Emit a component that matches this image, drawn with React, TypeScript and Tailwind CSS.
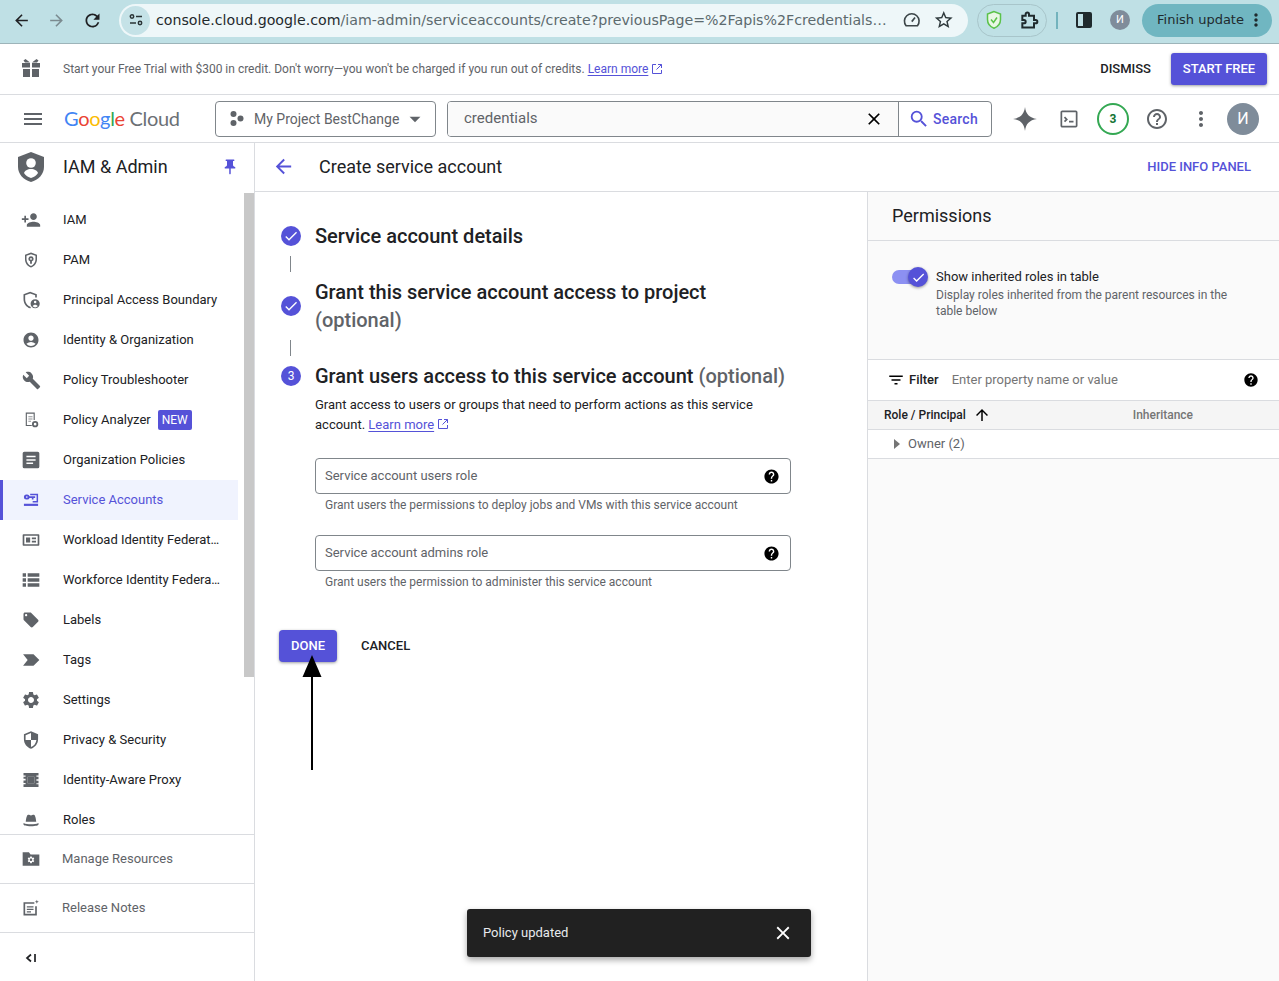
import React from "react";
import {
  MdArrowBack, MdArrowForward, MdRefresh, MdStarBorder, MdMenu, MdClose, MdSearch, MdHelpOutline, MdMoreVert, MdPushPin,
  MdPersonAdd, MdAccountCircle, MdBuild, MdLocalOffer, MdSettings, MdArrowUpward, MdHelp, MdCheck, MdFilterList, MdArrowDropDown,
} from "react-icons/md";

const P = "#5552d8";
const G = "#5f6368";

const Svg = ({ children, size = 20, className = "" }: { children: React.ReactNode; size?: number; className?: string }) => (
  <svg width={size} height={size} viewBox="0 0 24 24" fill="currentColor" className={className}>{children}</svg>
);

const icons: Record<string, React.ReactNode> = {
  iam: <MdPersonAdd size={20} />,
  pam: <Svg size={18}><path fillRule="evenodd" d="M12 2 4 5v6c0 5 3.400 9.700 8 11 4.600-1.300 8-6 8-11V5l-8-3Zm0 2.200 6 2.200V11c0 4-2.500 7.700-6 8.900-3.500-1.200-6-4.900-6-8.900V6.400l6-2.200Z" /><path fillRule="evenodd" d="M12 7a3.500 3.500 0 0 0-1.200 6.800V17h2.400v-3.200A3.500 3.500 0 0 0 12 7Zm0 2.300a1.200 1.200 0 1 1 0 2.400 1.200 1.200 0 0 1 0-2.400Z" /></Svg>,
  pab: <Svg size={20}><path fillRule="evenodd" d="M11 2 3 5v6c0 5 3.400 9.700 8 11l1-.3-1-1.900C7.500 18.700 5 15 5 11V6.400l6-2.200 6 2.200V9h2V5l-8-3Z" /><path fillRule="evenodd" d="M17 11a5.500 5.500 0 1 0 0 11 5.500 5.500 0 0 0 0-11Zm0 2a1.500 1.500 0 1 1 0 3 1.500 1.500 0 0 1 0-3Zm-3 6.500c.5-1 1.700-1.700 3-1.700s2.500.7 3 1.700a4 4 0 0 1-6 0Z" /></Svg>,
  identity: <MdAccountCircle size={18} />,
  tool: <MdBuild size={19} />,
  analyzer: <Svg size={18}><path fillRule="evenodd" d="M5 2h12v10h-1.500V3.500h-9v15H13V20H5V2Z" /><path d="M8.500 7h5.500v1.300H8.500zM8.500 10h5.500v1.300H8.500zM8.500 13h3.500v1.300H8.500z" opacity="0.7" /><circle cx="17.500" cy="17.500" r="3" fill="none" stroke="currentColor" strokeWidth="2.400" /></Svg>,
  org: <Svg size={20}><path fillRule="evenodd" d="M4 2h16a2 2 0 0 1 2 2v16a2 2 0 0 1-2 2H4a2 2 0 0 1-2-2V4a2 2 0 0 1 2-2Zm2.500 5v1.800h11V7h-11Zm0 4v1.800h11V11h-11Zm0 4v1.800h8V15h-8Z" /></Svg>,
  sa: <Svg size={20}><path fillRule="evenodd" d="M6.500 5.500h1a3 3 0 0 1 2.800 2H17v2h-2v2h-2v-2h-2.700a3 3 0 0 1-2.800 2h-1a3 3 0 0 1 0-6Zm.5 2a1 1 0 1 0 0 2 1 1 0 0 0 0-2Z" /><path d="M11 4.500h9.500V15H14v-1.800h4.700V6.300H11z" /><rect x="3.500" y="16.500" width="17" height="2.600" /></Svg>,
  workload: <Svg size={20}><path fillRule="evenodd" d="M3 5h18a1 1 0 0 1 1 1v12a1 1 0 0 1-1 1H3a1 1 0 0 1-1-1V6a1 1 0 0 1 1-1Zm1 2v10h16V7H4Zm2 2h5v6H6V9Zm7 0h5v2h-5V9Zm0 4h5v2h-5v-2Z" /></Svg>,
  workforce: <Svg size={20}><path d="M2 4h4v4H2zM8 4h14v4H8zM2 10h4v4H2zM8 10h14v4H8zM2 16h4v4H2zM8 16h14v4H8z" /></Svg>,
  labels: <MdLocalOffer size={18} />,
  tags: <Svg size={20}><path d="M2.500 5H15l7 7-7 7H2.500L8 12 2.500 5Z" /></Svg>,
  settings: <MdSettings size={20} />,
  privacy: <Svg size={20}><path fillRule="evenodd" d="M12 1.500 3.500 5v6.200c0 5.200 3.600 10 8.500 11.300 4.900-1.300 8.500-6.100 8.500-11.300V5L12 1.500ZM12 12H5.500V6.300L12 3.700V12Zm0 0h6.500c-.5 3.900-3 7.400-6.500 8.500V12Z" /></Svg>,
  iap: <Svg size={20}><path d="M3 3.500h18v3h-2.500v1.500h2.500v3h-2.500v2h2.500v3h-2.500V17h2.500v3.500H3V17h2.500v-1.500H3v-3h2.500v-2H3V8h2.500V6.500H3v-3Zm5 4.500v8h8V8H8Z" /><rect x="8" y="8" width="8" height="8" /></Svg>,
  roles: <Svg size={20}><path d="M8 6c1.500-.8 2.500.5 4 .5s2.500-1.300 4-.5c1.200.6 2 5 2.300 8H5.700C6 11 6.800 6.600 8 6Z" /><path d="M3 15.500c2.500 1.200 5.500 1.700 9 1.700s6.500-.5 9-1.700v2c0 1-3 2-9 2s-9-1-9-2z" /></Svg>,
};

const items: { k: string; t: string; active?: boolean; badge?: boolean }[] = [
  { k: "iam", t: "IAM" },
  { k: "pam", t: "PAM" },
  { k: "pab", t: "Principal Access Boundary" },
  { k: "identity", t: "Identity & Organization" },
  { k: "tool", t: "Policy Troubleshooter" },
  { k: "analyzer", t: "Policy Analyzer", badge: true },
  { k: "org", t: "Organization Policies" },
  { k: "sa", t: "Service Accounts", active: true },
  { k: "workload", t: "Workload Identity Federat…" },
  { k: "workforce", t: "Workforce Identity Federa…" },
  { k: "labels", t: "Labels" },
  { k: "tags", t: "Tags" },
  { k: "settings", t: "Settings" },
  { k: "privacy", t: "Privacy & Security" },
  { k: "iap", t: "Identity-Aware Proxy" },
  { k: "roles", t: "Roles" },
];

const StepDone = () => (
  <span className="w-5 h-5 rounded-full bg-[#5552d8] flex items-center justify-center shrink-0">
    <MdCheck size={16} color="#fff" />
  </span>
);

const Connector = () => <div className="ml-[35px] w-px h-4 bg-[#80868b]" />;

const ExtIcon = () => (
  <svg width="12" height="12" viewBox="0 0 12 12" fill="none" stroke="#5552d8" strokeWidth="1" className="inline-block ml-[3px] align-[-1px]">
    <path d="M5 1.500H1.500v9h9V7M7 1.500h3.500V5M10.500 1.500 5.500 6.500" />
  </svg>
);

const Field = ({ label, hint }: { label: string; hint: string }) => (
  <div className="w-[476px]">
    <div className="h-9 border border-[#80868b] rounded-[4px] flex items-center justify-between pl-[9px] pr-[10px] text-[13px] text-[#5f6368]">
      <span>{label}</span>
      <MdHelp size={17} color="#000" />
    </div>
    <div className="mt-px pl-[10px] text-xs leading-5 text-[#5f6368]">{hint}</div>
  </div>
);

export default function App() {
  return (
    <div className="w-[1279px] h-[981px] overflow-hidden flex flex-col bg-white font-['Roboto',sans-serif] text-[#202124] relative">
      {/* Browser toolbar */}
      <div className="h-[44px] shrink-0 pb-[3px] bg-[#bfe0e5] border-b border-[#9db4b9] flex items-center text-[#202124]">
        <div className="w-[119px] shrink-0 flex items-center pl-[12px] gap-[16px]">
          <MdArrowBack size={19} />
          <MdArrowForward size={19} color="#7b8b90" />
          <MdRefresh size={21} />
        </div>
        <div className="w-[849px] h-[33px] shrink-0 rounded-full bg-[#eef7f9] flex items-center pl-[2px] pr-[14px]">
          <span className="w-[29px] h-[29px] rounded-full bg-[#c5e2e7] flex items-center justify-center shrink-0">
            <svg width="16" height="16" viewBox="0 0 16 16" fill="none" stroke="#2a3436" strokeWidth="1.500"><circle cx="4" cy="4.500" r="1.700" /><path d="M8 4.500h6M2 11h6" /><circle cx="12" cy="11" r="1.700" /></svg>
          </span>
          <span className="ml-[6px] mt-px w-[732px] shrink-0 whitespace-nowrap font-['DejaVu_Sans',sans-serif] text-[14.2px] text-[#5c6a6e]">
            <span className="text-[#1f2a2d]">console.cloud.google.com</span>/iam-admin/serviceaccounts/create?previousPage=%2Fapis%2Fcredentials…
          </span>
          <svg width="20" height="20" viewBox="0 0 24 24" fill="none" stroke="#3c4649" strokeWidth="2" className="ml-[14px]"><path d="M5 19a9 9 0 1 1 14 0H5Z" /><path d="m12 14 4-5" /></svg>
          <MdStarBorder size={22} color="#2f3a3d" className="ml-[11px]" />
        </div>
        <div className="ml-[9px] w-[70px] h-[33px] rounded-full border border-[#a8c5ca] flex items-center justify-between pl-[7px] pr-[7px]">
          <svg width="18" height="20" viewBox="0 0 18 20" fill="#e9f7e5" stroke="#5bc24a" strokeWidth="1.500"><path d="M9 1.500 2.500 4v5.500c0 4 2.800 7.300 6.500 8.700 3.700-1.400 6.500-4.700 6.500-8.700V4L9 1.500Z" /><path d="m6 9.500 2.500 3 3.500-5" fill="none" /></svg>
          <svg width="20" height="20" viewBox="0 0 24 24" fill="none" stroke="#1f2a2d" strokeWidth="2.400"><path d="M4 7h4V5a2 2 0 0 1 4 0v2h6v5h2a2 2 0 0 1 0 4h-2v5H4v-5h2a2 2 0 0 0 0-4H4V7Z" /></svg>
        </div>
        <div className="ml-[9px] w-[2px] h-[17px] bg-[#73b3bd]" />
        <div className="ml-[18px] w-[16px] h-[16px] border-2 border-[#1f2a2d] rounded-[2px] flex justify-end"><div className="w-[7px] h-full bg-[#1f2a2d]" /></div>
        <div className="ml-[18px] w-[20px] h-[20px] rounded-full bg-[#7f8c9a] text-white text-[11px] flex items-center justify-center">И</div>
        <div className="ml-[12px] w-[130px] h-[33px] rounded-full bg-[#70b6c1] flex items-center pl-[15px] font-['DejaVu_Sans',sans-serif] text-[13px] text-[#1f2a2d]">
          Finish update
          <MdMoreVert size={20} className="ml-[2px]" />
        </div>
      </div>

      {/* Trial banner */}
      <div className="h-[51px] shrink-0 border-b border-[#dadce0] flex items-center pl-[22px] pr-[12px]">
        <svg width="18" height="18" viewBox="0 0 18 18" fill={G} className="-translate-y-px">
          <path d="M3.500 0 8 3.500H3L1.500 1.500 3.500 0ZM14.500 0 10 3.500h5l1.500-2L14.500 0Z" />
          <path d="M0 4h8v4.500H0zM10 4h8v4.500h-8zM1 10h7v8H1zM10 10h7v8h-7z" />
        </svg>
        <span className="ml-[23px] text-xs text-[#5f6368]">Start your Free Trial with $300 in credit. Don't worry—you won't be charged if you run out of credits.</span>
        <a className="ml-[3px] text-xs text-[#5552d8] underline underline-offset-2">Learn more</a>
        <ExtIcon />
        <span className="ml-auto text-[13px] font-medium text-[#202124]">DISMISS</span>
        <button className="ml-[20px] w-[96px] h-[32px] rounded-[3px] bg-[#5552d8] text-white text-[13px] font-medium shadow-[0_1px_3px_rgba(60,64,67,0.5)]">START FREE</button>
      </div>

      {/* Cloud header */}
      <div className="h-[48px] shrink-0 border-b border-[#dadce0] flex items-center">
        <MdMenu size={24} color={G} className="ml-[21px]" />
        <span className="ml-[19px] w-[151px] pb-[2px] text-[20px] tracking-[-0.35px] font-['Lato',sans-serif]">
          <span className="text-[#4285f4]">G</span><span className="text-[#ea4335]">o</span><span className="text-[#fbbc04]">o</span><span className="text-[#4285f4]">g</span><span className="text-[#34a853]">l</span><span className="text-[#ea4335]">e</span>
          <span className="text-[#6b7075]"> Cloud</span>
        </span>
        <div className="w-[221px] h-[36px] border border-[#80868b] rounded-[4px] flex items-center pl-[13px] text-sm text-[#5f6368]">
          <svg width="18" height="18" viewBox="0 0 18 18" fill="#5f6368"><circle cx="4.500" cy="4" r="3" /><circle cx="11.500" cy="8.500" r="3" /><circle cx="4.500" cy="13" r="3" /></svg>
          <span className="ml-[7px]">My Project BestChange</span>
          <MdArrowDropDown size={26} className="ml-[3px]" />
        </div>
        <div className="ml-[11px] w-[545px] h-[36px] border border-[#80868b] rounded-[4px] flex items-center overflow-hidden">
          <div className="w-[451px] h-full bg-[#fafafa] border-r border-[#80868b] flex items-center justify-between pl-[16px] pr-[14px] text-[15px] text-[#5f6368]">
            <span>credentials</span>
            <MdClose size={20} color="#000" />
          </div>
          <div className="flex items-center pl-[9px] text-sm tracking-[0.25px] font-medium text-[#5552d8]">
            <MdSearch size={22} />
            <span className="ml-[3px]">Search</span>
          </div>
        </div>
        <svg width="26" height="26" viewBox="0 0 24 24" fill={G} className="ml-[20px]"><path d="M12 1c.8 6.500 4 10 11 11-7 1-10.200 4.500-11 11-.8-6.500-4-10-11-11 7-1 10.200-4.500 11-11Z" /></svg>
        <svg width="18" height="18" viewBox="0 0 20 20" fill="none" stroke={G} strokeWidth="1.900" className="ml-[22px]"><rect x="1.500" y="1.500" width="17" height="17" rx="1" /><path d="m5 8 2.500 2.500L5 13M10 13h5" /></svg>
        <div className="ml-[19px] w-[32px] h-[32px] rounded-full border-2 border-[#34a853] flex items-center justify-center text-xs font-bold text-[#137333]">3</div>
        <MdHelpOutline size={24} color={G} className="ml-[16px]" />
        <MdMoreVert size={24} color={G} className="ml-[20px]" />
        <div className="ml-[14px] w-[32px] h-[32px] rounded-full bg-[#7f8c9a] text-white text-[16px] flex items-center justify-center">И</div>
      </div>

      {/* Body */}
      <div className="flex-1 min-h-0 flex">
        {/* Sidebar */}
        <aside className="w-[255px] shrink-0 border-r border-[#dadce0] flex flex-col">
          <div className="h-[49px] shrink-0 flex items-center pl-[18px] pb-[2px]">
            <svg width="26" height="30" viewBox="0 0 26 30" fill={G}>
              <path d="M13 0 0 5v10c0 7 5.500 13 13 15 7.500-2 13-8 13-15V5L13 0Z" />
              <circle cx="13" cy="11" r="4.800" fill="#fff" />
              <path d="M13 17c3.500 0 6.500 1.700 7 4-1.500 2.500-4.300 4.300-7 5-2.700-.7-5.500-2.500-7-5 .5-2.300 3.500-4 7-4Z" fill="#fff" />
            </svg>
            <span className="ml-[19px] text-[18px] text-[#202124]">IAM &amp; Admin</span>
            <MdPushPin size={18} color={P} className="ml-[53px]" />
          </div>
          <div className="h-[642px] shrink-0 overflow-hidden flex">
            <nav className="w-[238px] shrink-0 pt-[8px]">
              {items.map((it) => (
                <div key={it.t} className={`h-10 flex items-center ${it.active ? "bg-[#f0f3fe] border-l-[3px] border-[#5552d8] text-[#5552d8]" : "text-[#202124]"}`}>
                  <span className={`w-5 h-5 flex items-center justify-center shrink-0 ${it.active ? "ml-[18px] text-[#5552d8]" : "ml-[21px] text-[#5f6368]"}`}>{icons[it.k]}</span>
                  <span className="ml-[22px] text-[13px] whitespace-nowrap">{it.t}</span>
                  {it.badge && <span className="ml-[7px] px-[4px] h-5 rounded-[2px] bg-[#5552d8] text-white text-xs leading-5">NEW</span>}
                </div>
              ))}
            </nav>
            <div className="w-[6px]" />
            <div className="w-[10px] shrink-0 pt-px">
              <div className="h-[484px] bg-[#c8c8c8]" />
            </div>
          </div>
          <div className="h-[49px] shrink-0 border-t border-[#dadce0] flex items-center pl-[21px] text-[13px] text-[#5f6368]">
            <Svg size={20}>
              <path d="M2 4h7.500l2 2.500H22V20H2V4Z" />
              <MdSettings x={7} y={8} size={10} color="#fff" />
            </Svg>
            <span className="ml-[21px]">Manage Resources</span>
          </div>
          <div className="h-[49px] shrink-0 border-t border-[#dadce0] flex items-center pl-[21px] text-[13px] text-[#5f6368]">
            <Svg size={20}><path d="M3 5h13v2H5v12h12v-9h2v11H3V5ZM7 10h8v1.500H7zM7 13h8v1.500H7zM7 16h5v1.500H7zM19 2l.7 1.800 1.800.7-1.800.7L19 7l-.7-1.800-1.800-.7 1.800-.7L19 2Z" /></Svg>
            <span className="ml-[21px]">Release Notes</span>
          </div>
          <div className="flex-1 border-t border-[#dadce0] flex items-center pl-[25px] pt-[2px]">
            <svg width="12" height="12" viewBox="0 0 12 12" fill="none" stroke="#202124" strokeWidth="1.700"><path d="M6 2.500 2 6l4 3.500M10 2v8" /></svg>
          </div>
        </aside>

        {/* Main */}
        <div className="flex-1 min-w-0 flex flex-col">
          <div className="h-[49px] shrink-0 border-b border-[#dadce0] flex items-center pl-[17px] pr-[28px]">
            <MdArrowBack size={23} color={P} className="-translate-y-px" />
            <span className="ml-[24px] text-[18px] leading-6 text-[#202124]">Create service account</span>
            <span className="ml-auto text-[13px] font-medium text-[#5552d8]">HIDE INFO PANEL</span>
          </div>
          <div className="flex-1 min-h-0 flex">
            <main className="w-[612px] shrink-0 pt-[30px] relative">
              <div className="flex items-center h-7 pl-[26px] gap-[14px]">
                <StepDone />
                <h2 className="text-[20px] leading-7 font-medium text-[#202124]">Service account details</h2>
              </div>
              <div className="mt-[6px]"><Connector /></div>
              <div className="flex items-center pl-[26px] gap-[14px] mt-[6px]">
                <StepDone />
                <h2 className="w-[470px] text-[20px] leading-7 font-medium text-[#202124]">Grant this service account access to project <span className="text-[#5f6368]">(optional)</span></h2>
              </div>
              <div className="mt-[6px]"><Connector /></div>
              <div className="flex items-center h-7 pl-[26px] gap-[14px] mt-[6px]">
                <span className="w-5 h-5 rounded-full bg-[#5552d8] flex items-center justify-center text-white text-xs shrink-0">3</span>
                <h2 className="text-[20px] leading-7 font-medium text-[#202124] whitespace-nowrap">Grant users access to this service account <span className="text-[#5f6368]">(optional)</span></h2>
              </div>
              <div className="pl-[60px] mt-[5px]">
                <p className="w-[470px] text-[13px] leading-5 text-[#202124]">
                  Grant access to users or groups that need to perform actions as this service account. <a className="text-[#5552d8] underline underline-offset-2">Learn more</a><ExtIcon />
                </p>
                <div className="mt-[23px] space-y-[20px]">
                  <Field label="Service account users role" hint="Grant users the permissions to deploy jobs and VMs with this service account" />
                  <Field label="Service account admins role" hint="Grant users the permission to administer this service account" />
                </div>
              </div>
              <div className="mt-[38px] pl-[24px] flex items-center">
                <button className="w-[58px] h-8 rounded-[4px] bg-[#5552d8] text-white text-[13px] font-medium shadow-[0_1px_3px_rgba(60,64,67,0.5)]">DONE</button>
                <button className="ml-[24px] text-[13px] font-medium text-[#202124]">CANCEL</button>
              </div>
            </main>

            {/* Info panel */}
            <section className="flex-1 min-w-0 border-l border-[#dadce0] bg-[#fafafa] flex flex-col">
              <div className="h-[49px] shrink-0 border-b border-[#dadce0] flex items-center pl-[24px] pb-[2px] text-[18px] text-[#202124]">Permissions</div>
              <div className="h-[119px] shrink-0 border-b border-[#dadce0] flex pl-[24px] pt-[26px]">
                <div className="relative w-[36px] h-[20px] shrink-0">
                  <div className="absolute left-0 top-[3px] w-[34px] h-[14px] rounded-full bg-[#8c90f2]" />
                  <div className="absolute right-0 top-0 w-[20px] h-[20px] rounded-full bg-[#5552d8] shadow-[0_1px_3px_rgba(0,0,0,0.4)] flex items-center justify-center"><MdCheck size={15} color="#fff" /></div>
                </div>
                <div className="ml-[8px] w-[310px]">
                  <div className="text-[13px] leading-[20px] text-[#202124]">Show inherited roles in table</div>
                  <div className="text-xs leading-4 text-[#5f6368]">Display roles inherited from the parent resources in the table below</div>
                </div>
              </div>
              <div className="h-[41px] shrink-0 bg-white border-b border-[#dadce0] flex items-center pl-[19px] pr-[20px]">
                <MdFilterList size={18} color="#000" />
                <span className="ml-[4px] text-[13px] font-medium text-[#202124]">Filter</span>
                <span className="ml-[13px] text-[#757575] text-[13px]">Enter property name or value</span>
                <MdHelp size={16} color="#000" className="ml-auto" />
              </div>
              <div className="h-[29px] shrink-0 bg-[#f5f5f5] border-b border-[#dadce0] flex items-center pl-[16px] text-xs">
                <span className="font-medium text-[#202124]">Role / Principal</span>
                <MdArrowUpward size={18} color="#000" className="ml-[7px]" />
                <span className="ml-[142px] font-medium text-[#757575]">Inheritance</span>
              </div>
              <div className="h-[29px] shrink-0 bg-white border-b border-[#dadce0] flex items-center pl-[26px] text-[13px] text-[#5f6368]">
                <span className="w-0 h-0 border-y-[5px] border-y-transparent border-l-[6px] border-l-[#757575]" />
                <span className="ml-[8px]">Owner (2)</span>
              </div>
            </section>
          </div>
        </div>
      </div>

      {/* Annotation arrow */}
      <svg width="24" height="120" viewBox="0 0 24 120" className="absolute left-[300px] top-[652px]" fill="#000">
        <path d="M12 3 21.500 25H2.500Z" />
        <rect x="11" y="22" width="2" height="96" />
      </svg>

      {/* Toast */}
      <div className="absolute left-[467px] top-[909px] w-[344px] h-[48px] rounded-[3px] bg-[#212121] shadow-[0_3px_6px_rgba(0,0,0,0.35)] flex items-center justify-between pl-[16px] pr-[17px] text-[13px] text-[#e8eaed]">
        <span>Policy updated</span>
        <MdClose size={22} color="#fff" />
      </div>
    </div>
  );
}
